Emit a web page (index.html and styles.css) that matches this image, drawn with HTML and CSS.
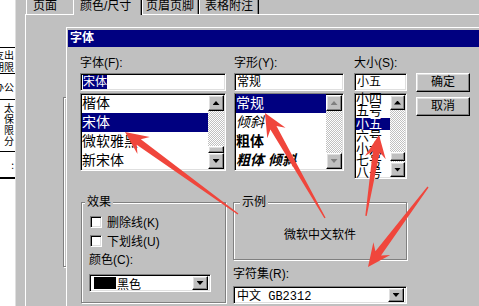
FILE: index.html
```html
<!DOCTYPE html>
<html lang="zh-CN">
<head>
    <meta charset="UTF-8">
    <meta name="viewport" content="width=device-width, initial-scale=1.0">
    <title>字体</title>
    <link rel="stylesheet" href="styles.css">
</head>
<body>

    <div class="desk">
        <!-- document behind the property sheet -->
        <div class="doc-strip">
            <div class="cell cell-a">
                <div class="ln">支出</div>
                <div class="ln">期限</div>
            </div>
            <div class="cell cell-b">
                <div class="ln">办公</div>
            </div>
            <div class="cell cell-c">
                <div class="ln">太</div>
                <div class="ln">保</div>
                <div class="ln">限</div>
                <div class="ln">分</div>
            </div>
            <div class="cell cell-d">
                <div class="ln">:</div>
            </div>
        </div>

        <div class="sheet">
            <ul class="tabs">
                <li class="tab tab-page">页面</li>
                <li class="tab tab-active">颜色/尺寸</li>
                <li class="tab tab-header">页眉页脚</li>
                <li class="tab tab-notes">表格附注</li>
            </ul>
            <div class="panel">
                <div class="under-group"></div>
            </div>
        </div>
    </div>

    <!-- Font dialog -->
    <div class="dialog">
        <div class="title-bar">字体</div>
        <div class="dialog-body">
            <div class="top-row">
                <div class="col col-font">
                    <div class="label">字体(F):</div>
                    <div class="edit"><span class="edit-sel">宋体</span></div>
                    <div class="list list-font">
                        <ul class="items">
                            <li>楷体</li>
                            <li class="selected">宋体</li>
                            <li>微软雅黑</li>
                            <li>新宋体</li>
                        </ul>
                        <div class="vscroll">
                            <span class="sbtn up"></span>
                            <span class="track"><span class="thumb"></span></span>
                            <span class="sbtn down"></span>
                        </div>
                    </div>
                </div>

                <div class="col col-style">
                    <div class="label">字形(Y):</div>
                    <div class="edit">常规</div>
                    <div class="list list-style">
                        <ul class="items">
                            <li class="selected">常规</li>
                            <li class="it">倾斜</li>
                            <li class="bd">粗体</li>
                            <li class="bd it">粗体 倾斜</li>
                        </ul>
                        <div class="vscroll disabled">
                            <span class="sbtn up"></span>
                            <span class="track"></span>
                            <span class="sbtn down"></span>
                        </div>
                    </div>
                </div>

                <div class="col col-size">
                    <div class="label">大小(S):</div>
                    <div class="edit">小五</div>
                    <div class="list list-size">
                        <ul class="items">
                            <li>小四</li>
                            <li>五号</li>
                            <li class="selected">小五</li>
                            <li>六号</li>
                            <li>小六</li>
                            <li>七号</li>
                            <li>八号</li>
                        </ul>
                        <div class="vscroll">
                            <span class="sbtn up"></span>
                            <span class="track"><span class="thumb"></span></span>
                            <span class="sbtn down"></span>
                        </div>
                    </div>
                </div>

                <div class="col col-buttons">
                    <button class="btn">确定</button>
                    <button class="btn">取消</button>
                </div>
            </div>

            <div class="bottom-row">
                <fieldset class="group group-effects">
                    <legend>效果</legend>
                    <div class="check-row"><span class="check"></span>删除线(K)</div>
                    <div class="check-row"><span class="check"></span>下划线(U)</div>
                    <div class="label-color">颜色(C):</div>
                    <div class="combo combo-color">
                        <span class="swatch"></span>
                        <span class="combo-text">黑色</span>
                        <span class="drop"></span>
                    </div>
                </fieldset>

                <div class="right-col">
                    <fieldset class="group group-sample">
                        <legend>示例</legend>
                        <div class="sample">微软中文软件</div>
                    </fieldset>
                    <div class="label-charset">字符集(R):</div>
                    <div class="combo combo-charset">
                        <span class="combo-text mono">中文 GB2312</span>
                        <span class="drop"></span>
                    </div>
                </div>
            </div>
        </div>
    </div>

    <!-- red annotation arrows drawn over the screenshot -->
    <svg class="marks" width="479" height="306" viewBox="0 0 479 306">
        <polygon transform="translate(125 132) rotate(35.97)" points="0,0 23,-10.5 17,-3.5 139.6,-0.7 139.6,0.7 17,3.5 23,10.5"/>
        <polygon transform="translate(265 113) rotate(60.26)" points="0,0 23,-10.5 17,-3.5 120.9,-0.7 120.9,0.7 17,3.5 23,10.5"/>
        <polygon transform="translate(379 135) rotate(99.12)" points="0,0 23,-10.5 17,-3.5 82,-0.7 82,0.7 17,3.5 23,10.5"/>
        <polygon transform="translate(368 267) rotate(-53.13)" points="0,0 23,-10.5 17,-3.5 100,-0.7 100,0.7 17,3.5 23,10.5"/>
    </svg>

</body>
</html>
```

FILE: styles.css
```css
* {
    box-sizing: border-box;
}

body {
    margin: 0;
    width: 479px;
    height: 306px;
    overflow: hidden;
    position: relative;
    background-color: #c0c0c0;
    font-family: "Liberation Sans", "Noto Sans CJK SC", sans-serif;
    font-size: 12px;
    color: #000;
}

.desk {
    display: flex;
    height: 100%;
}

/* document strip on the far left */
.doc-strip {
    width: 16px;
    flex: none;
    background-color: #fff;
    border-right: 1px solid #dfdfdf;
    padding-top: 47px;
    font-family: "Noto Sans CJK SC", sans-serif;
    font-size: 10px;
}

.cell {
    border-top: 1px solid #000;
    height: 26px;
}

.cell-a {
    padding-top: 1px;
}

.cell-c {
    height: 52px;
    padding-top: 2px;
}

.cell-d {
    border-bottom: 2px solid #000;
    height: 28px;
    padding-top: 7px;
}

.cell-a .ln {
    line-height: 12px;
}

.cell-b {
    padding-top: 7px;
}

.ln {
    display: flex;
    justify-content: flex-end;
    overflow: hidden;
    white-space: nowrap;
    line-height: 11px;
    padding-right: 1px;
}

/* property sheet with tabs */
.sheet {
    flex: 1;
    display: flex;
    flex-direction: column;
    margin-left: 9px;
}

.tabs {
    display: flex;
    list-style: none;
    margin: 0;
    padding: 0 0 0 1px;
    height: 14px;
}

.tab {
    height: 14px;
    line-height: 12px;
    white-space: nowrap;
    border-left: 1px solid #fff;
    border-right: 1px solid #000;
    box-shadow: inset -1px 0 #808080;
}

.tab-page {
    width: 47px;
    padding-left: 6px;
    border-right: 0;
    box-shadow: none;
}

.tab-active {
    width: 69px;
    height: 15px;
    padding-left: 6px;
    margin-bottom: -1px;
    position: relative;
    z-index: 1;
    background-color: #c0c0c0;
}

.tab-header {
    width: 57px;
    padding-left: 3px;
}

.tab-notes {
    width: 60px;
    padding-left: 5px;
}

.panel {
    flex: 1;
    border-top: 1px solid #fff;
    border-left: 1px solid #fff;
}

.under-group {
    width: 120px;
    height: 170px;
    margin: 82px 0 0 37px;
    border: 1px solid #808080;
    box-shadow: inset 1px 1px #fff, 1px 1px #fff;
}

/* the font dialog window */
.dialog {
    position: absolute;
    left: 66px;
    top: 27px;
    width: 430px;
    height: 300px;
    background-color: #c0c0c0;
    border-top: 1px solid #fff;
    border-left: 1px solid #fff;
    padding: 2px 0 0 1px;
}

.title-bar {
    height: 17px;
    line-height: 17px;
    padding-left: 2px;
    background-color: #000080;
    color: #fff;
    font-weight: bold;
}

.dialog-body {
    padding: 9px 0 0 12px;
}

.top-row {
    display: flex;
    align-items: flex-start;
}

.col-font {
    width: 146px;
    margin-right: 8px;
}

.col-style {
    width: 110px;
    margin-right: 10px;
}

.col-size {
    width: 53px;
    margin-right: 9px;
}

.col-buttons {
    width: 54px;
    padding-top: 17px;
    display: flex;
    flex-direction: column;
    gap: 5px;
}

.label {
    height: 17px;
    line-height: 14px;
    white-space: nowrap;
}

/* sunken 3d frame */
.edit,
.list,
.combo,
.check {
    border: 1px solid;
    border-color: #808080 #fff #fff #808080;
    box-shadow: inset 1px 1px #000, inset -1px -1px #dfdfdf;
    background-color: #fff;
}

.edit {
    height: 18px;
    padding: 2px 2px 0;
    line-height: 13px;
    white-space: nowrap;
}

.edit-sel {
    background-color: #000080;
    color: #fff;
}

.list {
    margin-top: 2px;
    height: 78px;
    padding: 1px;
    display: flex;
}

.list-size {
    height: 86px;
}

.items {
    flex: 1;
    list-style: none;
    margin: -1px 0 0;
    padding: 0;
    overflow: hidden;
    font-size: 14px;
    line-height: 19px;
    white-space: nowrap;
}

.list-size .items {
    margin-top: -2px;
    font-size: 13px;
    line-height: 12.4px;
    overflow: visible;
}

.items .selected {
    background-color: #000080;
    color: #fff;
}

.items .it {
    font-style: italic;
}

.items .bd {
    font-weight: bold;
}

/* scrollbars */
.vscroll {
    width: 16px;
    flex: none;
    display: flex;
    flex-direction: column;
    background-color: #c0c0c0;
}

.list-size .vscroll {
    width: 15px;
}

.sbtn,
.thumb,
.btn,
.drop {
    border: 1px solid;
    border-color: #fff #000 #000 #fff;
    box-shadow: inset -1px -1px #808080, inset 1px 1px #dfdfdf;
    background-color: #c0c0c0;
}

.sbtn {
    height: 16px;
    flex: none;
    display: flex;
    align-items: center;
    justify-content: center;
}

.list-size .sbtn {
    height: 15px;
}

.sbtn::after,
.drop::after {
    content: "";
    width: 7px;
    height: 4px;
    background-color: #000;
}

.up::after {
    clip-path: polygon(50% 0, 100% 100%, 0 100%);
}

.down::after,
.drop::after {
    clip-path: polygon(0 0, 100% 0, 50% 100%);
}

.disabled .sbtn::after {
    background-color: #808080;
}

.track {
    flex: 1;
    display: flex;
    flex-direction: column;
    justify-content: flex-end;
    background: repeating-conic-gradient(#fff 0 25%, #c0c0c0 0 50%) 0 0 / 2px 2px;
}

.thumb {
    height: 7px;
}

.list-size .thumb {
    height: 9px;
    margin-bottom: 1px;
}

.btn {
    height: 19px;
    padding: 0;
    font-family: inherit;
    font-size: 12px;
    line-height: 15px;
    color: #000;
}

/* lower half: group boxes */
.bottom-row {
    display: flex;
    margin-top: 16px;
}

.group {
    margin: 0;
    border: 1px solid #808080;
    box-shadow: inset 1px 1px #fff, 1px 1px #fff;
    min-width: 0;
}

.group legend {
    padding: 0 2px;
    line-height: 14px;
    background-color: #c0c0c0;
}

.group-effects {
    width: 145px;
    height: 108px;
    margin-left: 1px;
    padding: 3px 0 0 7px;
}

.group-effects legend {
    margin-left: -4px;
}

.check-row {
    height: 19px;
    display: flex;
    align-items: center;
    gap: 5px;
    white-space: nowrap;
}

.check {
    width: 12px;
    height: 12px;
    margin-left: 1px;
}

.label-color {
    margin-top: 3px;
    line-height: 14px;
}

.combo {
    height: 18px;
    padding: 2px;
    display: flex;
    align-items: center;
}

.combo-color {
    width: 122px;
    margin-top: 7px;
}

.swatch {
    width: 22px;
    height: 12px;
    margin-left: 2px;
    margin-right: 1px;
    background-color: #000;
}

.combo-text {
    flex: 1;
    white-space: nowrap;
}

.drop {
    width: 16px;
    height: 14px;
    display: flex;
    align-items: center;
    justify-content: center;
}

.right-col {
    width: 174px;
    margin-left: 7px;
}

.group-sample {
    height: 65px;
    padding: 19px 0 0;
}

.group-sample legend {
    margin-left: 6px;
}

.sample {
    text-align: center;
    line-height: 14px;
}

.label-charset {
    margin-top: 7px;
    line-height: 14px;
}

.combo-charset {
    margin-top: 5px;
    padding-left: 3px;
}

.mono {
    font-family: "Liberation Mono", "Noto Sans CJK SC", monospace;
}

/* annotation layer */
.marks {
    position: absolute;
    left: 0;
    top: 0;
    pointer-events: none;
    fill: #f0463c;
}
```
